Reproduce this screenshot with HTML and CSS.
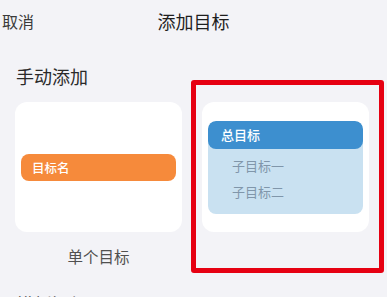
FILE: index.html
```html
<!DOCTYPE html>
<html lang="zh">
<head>
<meta charset="utf-8">
<link rel="stylesheet" href="styles.css">
</head>
<body>
<div class="page">
  <header class="topbar">
    <span class="cancel">取消</span>
    <span class="title">添加目标</span>
    <span></span>
  </header>
  <section class="section">
    <h2 class="section-title">手动添加</h2>
    <div class="options">
      <div class="option">
        <div class="card single">
          <div class="goal-bar">目标名</div>
        </div>
        <div class="caption">单个目标</div>
      </div>
      <div class="option">
        <div class="card multi">
          <div class="tree">
            <div class="tree-head">总目标</div>
            <div class="tree-item">子目标一</div>
            <div class="tree-item">子目标二</div>
          </div>
        </div>
        <div class="highlight"></div>
      </div>
    </div>
  </section>
  <section class="section section-next">
    <h2 class="section-title">模板添加</h2>
  </section>
</div>
</body>
</html>
```
FILE: styles.css
```css
html, body {
  margin: 0;
  padding: 0;
}
body {
  background: #f3f3f7;
  font-family: "Noto Sans CJK SC", "Noto Sans", sans-serif;
  width: 387px;
  height: 297px;
  overflow: hidden;
}
.topbar {
  display: grid;
  grid-template-columns: 1fr auto 1fr;
  align-items: center;
  height: 42px;
  padding: 0 2px;
}
.cancel {
  font-size: 16px;
  color: #3a3a3a;
}
.title {
  font-size: 18px;
  color: #1e1e1e;
  font-weight: 400;
}
.section {
  padding: 0 15px;
}
.section-title {
  margin: 0;
  padding: 22px 0 0 1px;
  font-size: 18px;
  font-weight: 400;
  color: #2a2a2a;
  line-height: 24px;
}
.section-next {
  margin-top: 4px;
}
.options {
  display: flex;
  gap: 20px;
  margin-top: 14px;
}
.option {
  position: relative;
  width: 167px;
}
.card {
  background: #ffffff;
  border-radius: 12px;
  height: 130px;
  box-sizing: border-box;
  padding: 0 6px;
  display: flex;
  flex-direction: column;
  justify-content: center;
}
.goal-bar {
  background: #f68a3b;
  color: #fff;
  border-radius: 8px;
  height: 27px;
  line-height: 27px;
  font-size: 12.5px;
  font-weight: 500;
  padding-left: 11px;
}
.caption {
  text-align: center;
  font-size: 15.5px;
  color: #505050;
  margin-top: 14px;
  line-height: 20px;
}
.tree {
  background: #c9e1f1;
  border-radius: 8px;
  height: 93px;
  overflow: hidden;
}
.tree-head {
  background: #3d8fcf;
  color: #fff;
  height: 28px;
  line-height: 28px;
  border-radius: 8px;
  font-size: 13px;
  font-weight: 500;
  padding-left: 13px;
}
.tree-item {
  color: #8096aa;
  font-size: 13px;
  line-height: 26px;
  padding-left: 24px;
}
.tree-head + .tree-item {
  margin-top: 4px;
}
.highlight {
  position: absolute;
  left: -11px;
  top: -22px;
  width: 193px;
  height: 193px;
  box-sizing: border-box;
  border: 5px solid #e60012;
  border-radius: 3px;
}
```
